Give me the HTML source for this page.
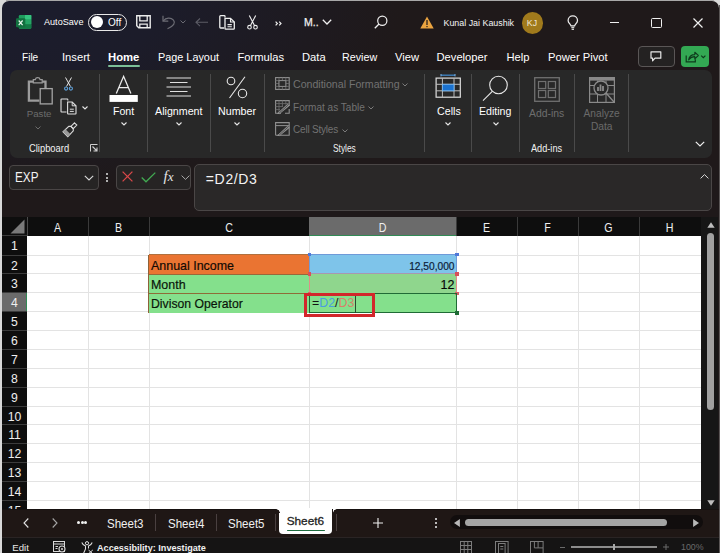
<!DOCTYPE html>
<html><head><meta charset="utf-8">
<style>
*{margin:0;padding:0;box-sizing:border-box}
html,body{width:720px;height:553px;overflow:hidden;background:#d9d9d9}
body{position:relative;font-family:"Liberation Sans",sans-serif;color:#fff}
.a{position:absolute}
.t{position:absolute;white-space:nowrap;line-height:1}
#win{position:absolute;left:2px;top:1px;width:716.5px;height:560px;border-radius:7px 7px 0 0;overflow:hidden;
 background:radial-gradient(ellipse 400px 190px at 0 0,#1b1c2d 0%,#1c1c2a 40%,rgba(31,25,26,0) 100%),#1f191a}
.sep{position:absolute;width:1px;background:#4a4a4a}
svg{position:absolute;overflow:visible}
</style></head><body>
<div id="win"></div>

<!-- TITLE BAR -->
<svg style="left:16px;top:14.7px" width="16" height="14" viewBox="0 0 16 14">
  <rect x="2.8" y="0" width="12.5" height="13.8" rx="1.2" fill="#1f9d5e"/>
  <rect x="9" y="0" width="6.3" height="4.6" fill="#35c47f"/>
  <rect x="9" y="4.6" width="6.3" height="4.6" fill="#25a565"/>
  <rect x="2.8" y="9.2" width="12.5" height="4.6" rx="1" fill="#137a45"/>
  <rect x="0" y="3.2" width="9.3" height="9.1" rx="1" fill="#12703f"/>
  <path d="M2.7 5.5 L6.6 10.2 M6.6 5.5 L2.7 10.2" stroke="#e8f5ec" stroke-width="1.2"/>
</svg>
<div class="t" style="left:44px;top:18px;font-size:9.1px;color:#fff">AutoSave</div>
<div class="a" style="left:87.5px;top:13.5px;width:39px;height:17.5px;border:1.3px solid #e8e8e8;border-radius:9px"></div>
<div class="a" style="left:90.5px;top:15.7px;width:12.6px;height:12.6px;border-radius:50%;background:#fff"></div>
<div class="t" style="left:108px;top:18px;font-size:10px;color:#fff">Off</div>


<!-- save -->
<svg style="left:136px;top:15px" width="15" height="14" viewBox="0 0 15 14">
 <path d="M0.75 0.75 H14.2 V12.8 H2.8 L0.75 10.8 Z" fill="none" stroke="#ececec" stroke-width="1.4"/>
 <path d="M3.8 0.75 V5.9 H11.2 V0.75" fill="none" stroke="#ececec" stroke-width="1.3"/>
 <path d="M3.8 12.8 V9.1 H11.2 V12.8" fill="none" stroke="#ececec" stroke-width="1.3"/>
</svg>
<!-- undo gray -->
<svg style="left:161px;top:15px" width="15" height="15" viewBox="0 0 15 15">
 <path d="M2 0.8 V6.1 H7.3" fill="none" stroke="#6c6c74" stroke-width="1.2"/>
 <path d="M2.3 5.9 C5 2.6 9.8 2.2 12.5 5.2 C14.6 7.8 13 11 6.5 13.8" fill="none" stroke="#6c6c74" stroke-width="1.2"/>
</svg>
<svg style="left:180px;top:20.3px" width="6" height="4" viewBox="0 0 6 4"><path d="M0.5 0.5 L3 3 L5.5 0.5" fill="none" stroke="#6c6c74" stroke-width="1"/></svg>
<!-- back arrow gray -->
<svg style="left:195px;top:18px" width="14" height="9" viewBox="0 0 14 9">
 <path d="M13 4.3 H1 M5 0.5 L1 4.3 L5 8.1" fill="none" stroke="#5c5c66" stroke-width="1.1"/>
</svg>
<!-- copy -->
<svg style="left:219px;top:15px" width="17" height="15" viewBox="0 0 17 15">
 <path d="M6 2.6 V1.4 Q6 0.7 5.3 0.7 H1.6 Q0.8 0.7 0.8 1.4 V12.3 Q0.8 13 1.6 13 H5" fill="none" stroke="#efefef" stroke-width="1.3"/>
 <path d="M6 3.3 H11.5 L15.3 7 V13.4 Q15.3 14.2 14.5 14.2 H6.8 Q6 14.2 6 13.4 Z" fill="none" stroke="#efefef" stroke-width="1.3"/>
 <path d="M11.5 3.3 V7 H15.3" fill="none" stroke="#efefef" stroke-width="1.1"/>
 <path d="M8.5 9.6 H12.8 M8.5 11.7 H12.8" stroke="#efefef" stroke-width="1.1"/>
</svg>
<!-- scissors -->
<svg style="left:247px;top:15px" width="11" height="15" viewBox="0 0 11 15">
 <path d="M2.3 0.5 L7.6 10.8 M8.7 0.5 L3.4 10.8" fill="none" stroke="#efefef" stroke-width="1.1"/>
 <circle cx="2.5" cy="12.2" r="1.8" fill="none" stroke="#efefef" stroke-width="1.1"/>
 <circle cx="8.5" cy="12.2" r="1.8" fill="none" stroke="#efefef" stroke-width="1.1"/>
</svg>
<svg style="left:274.5px;top:21px" width="7" height="5" viewBox="0 0 7 5"><path d="M0.6 0.6 L2.4 2.5 L0.6 4.4 M4.2 0.6 L6 2.5 L4.2 4.4" fill="none" stroke="#efefef" stroke-width="1.2"/></svg>
<div class="t" style="left:304px;top:17.3px;font-size:10.5px;color:#f0f0f0;-webkit-text-stroke:0.25px #f0f0f0">M..</div>
<svg style="left:322px;top:19px" width="10" height="6" viewBox="0 0 10 6"><path d="M0.8 0.8 L5 5 L9.2 0.8" fill="none" stroke="#f0f0f0" stroke-width="1.3"/></svg>
<!-- search -->
<svg style="left:374px;top:15px" width="14" height="14" viewBox="0 0 14 14">
 <circle cx="8.3" cy="5.7" r="4.6" fill="none" stroke="#f0f0f0" stroke-width="1.2"/>
 <path d="M5 9 L0.8 13.2" stroke="#f0f0f0" stroke-width="1.3"/>
</svg>
<!-- warning -->
<svg style="left:420px;top:16px" width="14" height="13" viewBox="0 0 14 13">
 <path d="M7 0.5 L13.7 12.5 H0.3 Z" fill="#eba440"/>
 <rect x="6.4" y="4" width="1.2" height="5" fill="#1e1a1c"/>
 <rect x="6.4" y="10" width="1.2" height="1.2" fill="#1e1a1c"/>
</svg>
<div class="t" style="left:443.5px;top:18.6px;font-size:8.9px;color:#f4f4f4">Kunal Jai Kaushik</div>
<div class="a" style="left:521.5px;top:12.3px;width:21.3px;height:21.3px;border-radius:50%;background:#a07a1c"></div>
<div class="t" style="left:525.5px;top:19px;font-size:8.8px;color:#efe6d2;width:13px;text-align:center">KJ</div>
<!-- bulb -->
<svg style="left:567px;top:14.5px" width="12" height="16" viewBox="0 0 12 16">
 <path d="M4 10.8 C3.6 9.2 1.1 8 1.1 5.4 C1.1 2.7 3.2 0.9 5.8 0.9 C8.4 0.9 10.5 2.7 10.5 5.4 C10.5 8 8 9.2 7.6 10.8 Z" fill="none" stroke="#ececec" stroke-width="1.25"/>
 <path d="M4.3 12.5 H7.3" stroke="#cfcfcf" stroke-width="1.4"/>
 <path d="M4.6 14.3 H7" stroke="#e4e4e4" stroke-width="1.2"/>
</svg>
<!-- window controls -->
<div class="a" style="left:609.5px;top:21.5px;width:9.5px;height:1.2px;background:#f0f0f0"></div>
<div class="a" style="left:651px;top:18px;width:10.5px;height:10px;border:1.2px solid #f0f0f0;border-radius:1.5px"></div>
<svg style="left:693px;top:17.5px" width="10" height="10" viewBox="0 0 10 10"><path d="M0.5 0.5 L9.5 9.5 M9.5 0.5 L0.5 9.5" stroke="#f0f0f0" stroke-width="1.2"/></svg>

<!-- MENU -->
<div class="t" style="left:21.5px;top:51.5px;font-size:11.2px;transform:scaleX(0.9);transform-origin:0 0">File</div>
<div class="t" style="left:62px;top:51.5px;font-size:11.2px">Insert</div>
<div class="t" style="left:108px;top:51.5px;font-size:11.3px;font-weight:bold">Home</div>
<div class="a" style="left:108.3px;top:65px;width:32px;height:1.9px;background:#7cbf98;border-radius:1px"></div>
<div class="t" style="left:157.5px;top:51.5px;font-size:11.2px;transform:scaleX(0.97);transform-origin:0 0">Page Layout</div>
<div class="t" style="left:237.5px;top:51.5px;font-size:11.2px">Formulas</div>
<div class="t" style="left:302px;top:51.5px;font-size:11.2px">Data</div>
<div class="t" style="left:342px;top:51.5px;font-size:11.2px;transform:scaleX(0.96);transform-origin:0 0">Review</div>
<div class="t" style="left:395px;top:51.5px;font-size:11.2px">View</div>
<div class="t" style="left:436.5px;top:51.5px;font-size:11.2px">Developer</div>
<div class="t" style="left:506.5px;top:51.5px;font-size:11.2px">Help</div>
<div class="t" style="left:548px;top:51.5px;font-size:11.2px">Power Pivot</div>
<div class="a" style="left:638px;top:45.5px;width:37px;height:21.5px;border:1px solid #5a5656;border-radius:4px;background:#242222"></div>
<svg style="left:650px;top:51px" width="12" height="11" viewBox="0 0 12 11">
 <path d="M1 0.8 H10.8 V7.2 H5 L2.6 9.8 V7.2 H1 Z" fill="none" stroke="#e8e8e8" stroke-width="1.2" stroke-linejoin="round"/>
</svg>
<div class="a" style="left:681.3px;top:45.5px;width:27.8px;height:21.5px;border-radius:4px;background:#33a853"></div>
<svg style="left:684.5px;top:50.5px" width="22" height="12" viewBox="0 0 22 12">
 <path d="M1.2 4.5 V10.8 H10.3 V8.3" fill="none" stroke="#0e3a1c" stroke-width="1.2"/>
 <path d="M3.6 8.8 C4.2 5.3 6.6 3.6 9.8 3.6 V1.2 L13.3 4.5 L9.8 7.8 V5.6 C7.4 5.6 5.3 6.6 3.6 8.8 Z" fill="none" stroke="#0e3a1c" stroke-width="1.1" stroke-linejoin="round"/>
 <path d="M16.2 4.6 L18.3 6.7 L20.4 4.6" fill="none" stroke="#0e3a1c" stroke-width="1.2"/>
</svg>

<!-- RIBBON -->
<div class="a" style="left:10px;top:70px;width:702px;height:88px;border-radius:7px;background:#282828"></div>
<div class="sep" style="left:99px;top:74px;height:78px"></div>
<div class="sep" style="left:147px;top:74px;height:78px"></div>
<div class="sep" style="left:210px;top:74px;height:78px"></div>
<div class="sep" style="left:264px;top:74px;height:78px"></div>
<div class="sep" style="left:424px;top:74px;height:78px"></div>
<div class="sep" style="left:471px;top:74px;height:78px"></div>
<div class="sep" style="left:519px;top:74px;height:78px"></div>
<div class="sep" style="left:574px;top:74px;height:78px"></div>
<div class="sep" style="left:628px;top:74px;height:78px"></div>

<!-- paste -->
<svg style="left:27px;top:76px" width="27" height="29" viewBox="0 0 27 29">
 <path d="M6 5.7 H1.9 V24.7 H12.4" fill="none" stroke="#9c9c9c" stroke-width="2.3"/>
 <path d="M15.2 5.7 H18.5 V12" fill="none" stroke="#9c9c9c" stroke-width="2.3"/>
 <path d="M6.3 3.6 H8.3 C8.8 1 12.6 1 13.1 3.6 H15.2 V6.8 H6.3 Z" fill="none" stroke="#9c9c9c" stroke-width="1.2"/>
 <rect x="13.2" y="12.6" width="12" height="15.3" fill="none" stroke="#a4a4a4" stroke-width="1.3"/>
</svg>
<div class="t" style="left:26.7px;top:109.4px;font-size:9.7px;color:#6c6c6c">Paste</div>
<svg style="left:35px;top:125.5px" width="6" height="4" viewBox="0 0 6 4"><path d="M0.5 0.5 L3 3 L5.5 0.5" fill="none" stroke="#6c6c6c" stroke-width="1"/></svg>
<!-- cut blue -->
<svg style="left:64px;top:77px" width="9" height="14" viewBox="0 0 9 14">
 <path d="M1.5 0.5 L6.5 9.5 M7.5 0.5 L2.5 9.5" fill="none" stroke="#e6e6e6" stroke-width="1"/>
 <circle cx="2.1" cy="11.6" r="1.55" fill="none" stroke="#5d9fd8" stroke-width="1.1"/>
 <circle cx="6.9" cy="11.6" r="1.55" fill="none" stroke="#5d9fd8" stroke-width="1.1"/>
</svg>
<!-- copy -->
<svg style="left:60px;top:98px" width="18" height="17" viewBox="0 0 18 17">
 <path d="M7.8 2.6 V1.5 Q7.8 1 7.3 1 H1.5 Q1 1 1 1.5 V13.5 Q1 14 1.5 14 H6.5" fill="none" stroke="#e0e0e0" stroke-width="1.1"/>
 <path d="M7.6 4 H12.2 L16 7.8 V15.5 Q16 16 15.5 16 H8.1 Q7.6 16 7.6 15.5 Z" fill="none" stroke="#e0e0e0" stroke-width="1.1"/>
 <path d="M12.2 4 V7.8 H16" fill="none" stroke="#e0e0e0" stroke-width="1"/>
 <path d="M9.8 11.2 H13.8 M9.8 13.4 H13.8" stroke="#e0e0e0" stroke-width="1"/>
</svg>
<svg style="left:82px;top:105.5px" width="6" height="4" viewBox="0 0 6 4"><path d="M0.5 0.5 L3 3 L5.5 0.5" fill="none" stroke="#e6e6e6" stroke-width="1.1"/></svg>
<!-- format painter -->
<svg style="left:61.5px;top:121.5px" width="16" height="16" viewBox="0 0 16 16">
 <path d="M12.5 0.8 L14.8 3.1 L11.2 6.7 L8.9 4.4 Z" fill="none" stroke="#dcdcdc" stroke-width="1.1"/>
 <path d="M8.9 4.4 L11.2 6.7 L11.3 8.8 L5.8 14.6 L1 9.8 L6.8 4.3 Z" fill="none" stroke="#dcdcdc" stroke-width="1.1"/>
 <path d="M1 9.8 L5.8 14.6 L8.3 12 L3.6 7.3 Z" fill="#9a9a9a"/>
</svg>
<div class="t" style="left:29.3px;top:143.9px;font-size:10.2px;color:#f0f0f0;transform:scaleX(0.92);transform-origin:0 0">Clipboard</div>
<svg style="left:90px;top:144px" width="8" height="8" viewBox="0 0 8 8">
 <path d="M0.5 7.5 V0.5 H7.5" fill="none" stroke="#d0d0d0" stroke-width="1"/>
 <path d="M2.5 2.5 L7 7 M7 3.5 V7 H3.5" fill="none" stroke="#d0d0d0" stroke-width="1.1"/>
</svg>

<!-- font -->
<svg style="left:109px;top:76px" width="30" height="27" viewBox="0 0 30 27">
 <path d="M7.3 17.5 L14.6 0.3 L21.9 17.5 M9.7 11.6 H19.5" fill="none" stroke="#ececec" stroke-width="1.3"/>
 <rect x="0.5" y="19" width="28.3" height="6.9" fill="#ffffff"/>
</svg>
<div class="t" style="left:113px;top:106px;font-size:10.6px">Font</div>
<svg style="left:120.5px;top:122px" width="6" height="4" viewBox="0 0 6 4"><path d="M0.5 0.5 L3 3 L5.5 0.5" fill="none" stroke="#e6e6e6" stroke-width="1.1"/></svg>

<!-- alignment -->
<svg style="left:166px;top:77px" width="26" height="21" viewBox="0 0 26 21">
 <path d="M0.5 1 H25 M4 5.5 H21.5 M0.5 10 H25 M4 14.5 H21.5 M0.5 19 H25" stroke="#e0e0e0" stroke-width="1.1"/>
</svg>
<div class="t" style="left:155px;top:106px;font-size:10.7px">Alignment</div>
<svg style="left:176px;top:122px" width="6" height="4" viewBox="0 0 6 4"><path d="M0.5 0.5 L3 3 L5.5 0.5" fill="none" stroke="#e6e6e6" stroke-width="1.1"/></svg>

<!-- number -->
<svg style="left:226px;top:76px" width="22" height="23" viewBox="0 0 22 23">
 <circle cx="5" cy="5" r="3.8" fill="none" stroke="#e8e8e8" stroke-width="1.1"/>
 <circle cx="16.5" cy="17.5" r="4.2" fill="none" stroke="#e8e8e8" stroke-width="1.1"/>
 <path d="M19 0.8 L3.5 22" stroke="#e8e8e8" stroke-width="1.1"/>
</svg>
<div class="t" style="left:218px;top:106px;font-size:10.7px">Number</div>
<svg style="left:233.5px;top:122px" width="6" height="4" viewBox="0 0 6 4"><path d="M0.5 0.5 L3 3 L5.5 0.5" fill="none" stroke="#e6e6e6" stroke-width="1.1"/></svg>

<!-- styles -->
<svg style="left:274.5px;top:77px" width="15" height="13" viewBox="0 0 15 13">
 <rect x="0.6" y="0.6" width="13.6" height="11.8" fill="none" stroke="#909090" stroke-width="1.1"/>
 <path d="M0.6 3.6 H14.2 M0.6 6.5 H14.2 M0.6 9.4 H14.2 M4 0.6 V12.4 M7.4 0.6 V12.4 M10.8 0.6 V12.4" stroke="#6a6a6a" stroke-width="0.9"/>
 <rect x="4" y="3.6" width="6.8" height="5.8" fill="#2a2a2a" stroke="#8a8a8a" stroke-width="1"/>
</svg>
<div class="t" style="left:293px;top:79.3px;font-size:10.6px;color:#727272">Conditional Formatting</div>
<svg style="left:402px;top:82.5px" width="6" height="4" viewBox="0 0 6 4"><path d="M0.5 0.5 L3 3 L5.5 0.5" fill="none" stroke="#7b7b7b" stroke-width="1"/></svg>
<svg style="left:274.5px;top:99.7px" width="15" height="14" viewBox="0 0 15 14">
 <path d="M6 13.2 H0.6 V0.6 H14.2 V6" fill="none" stroke="#909090" stroke-width="1.1"/>
 <path d="M0.6 3.6 H14.2 M0.6 6.6 H8 M0.6 9.6 H5 M4 0.6 V13 M7.4 0.6 V7 M10.8 0.6 V4.5" stroke="#6a6a6a" stroke-width="0.9"/>
 <path d="M2.5 13.4 L12.6 4.2 L14.2 5.8 L4.6 13.6 Z" fill="#9a9a9a" stroke="#9a9a9a" stroke-width="0.6"/>
 <path d="M4.2 13 L13 5.2" stroke="#3a3a3a" stroke-width="0.8"/>
 <path d="M14.2 9 V13.2 H10" fill="none" stroke="#909090" stroke-width="1.1"/>
</svg>
<div class="t" style="left:293px;top:102.6px;font-size:10.05px;color:#727272">Format as Table</div>
<svg style="left:368px;top:105.5px" width="6" height="4" viewBox="0 0 6 4"><path d="M0.5 0.5 L3 3 L5.5 0.5" fill="none" stroke="#7b7b7b" stroke-width="1"/></svg>
<svg style="left:274.5px;top:122.4px" width="15" height="14" viewBox="0 0 15 14">
 <path d="M0.6 13.2 V0.6 H14.2 V13.2 H0.6" fill="none" stroke="#909090" stroke-width="1.1"/>
 <path d="M0.6 3.6 H14.2" stroke="#909090" stroke-width="1"/>
 <path d="M2.5 13.4 L12.6 4.2 L14.2 5.8 L4.6 13.6 Z" fill="#9a9a9a" stroke="#9a9a9a" stroke-width="0.6"/>
 <path d="M4.2 13 L13 5.2" stroke="#3a3a3a" stroke-width="0.8"/>
</svg>
<div class="t" style="left:293px;top:125.2px;font-size:10px;letter-spacing:-0.2px;color:#727272">Cell Styles</div>
<svg style="left:342px;top:128.5px" width="6" height="4" viewBox="0 0 6 4"><path d="M0.5 0.5 L3 3 L5.5 0.5" fill="none" stroke="#7b7b7b" stroke-width="1"/></svg>
<div class="t" style="left:332.8px;top:143.9px;font-size:10.2px;color:#f0f0f0;transform:scaleX(0.82);transform-origin:0 0">Styles</div>

<!-- cells -->
<svg style="left:435px;top:74px" width="27" height="25" viewBox="0 0 27 25">
 <path d="M6 1.2 H20" stroke="#3f86c8" stroke-width="1.3"/>
 <path d="M6 0 V2.4 M20 0 V2.4" stroke="#7ab4e8" stroke-width="1"/>
 <rect x="1.1" y="4.1" width="24.2" height="19.1" fill="none" stroke="#dedede" stroke-width="1.2"/>
 <path d="M1.1 10.3 H25.3 M1.1 16.8 H25.3 M7.4 4.1 V23.2 M19 4.1 V23.2" stroke="#bdbdbd" stroke-width="1"/>
 <rect x="7.4" y="10.3" width="11.6" height="6.5" fill="#1a72d0" stroke="#78b8f0" stroke-width="0.9"/>
</svg>
<div class="t" style="left:437px;top:106px;font-size:10.7px">Cells</div>
<svg style="left:444.5px;top:122px" width="6" height="4" viewBox="0 0 6 4"><path d="M0.5 0.5 L3 3 L5.5 0.5" fill="none" stroke="#e6e6e6" stroke-width="1.1"/></svg>

<!-- editing -->
<svg style="left:482px;top:75px" width="27" height="27" viewBox="0 0 27 27">
 <circle cx="16.5" cy="10" r="8.8" fill="none" stroke="#e8e8e8" stroke-width="1.1"/>
 <path d="M10.3 16.3 L1 25.6" stroke="#e8e8e8" stroke-width="1.1"/>
</svg>
<div class="t" style="left:479px;top:106px;font-size:10.6px">Editing</div>
<svg style="left:492.5px;top:122px" width="6" height="4" viewBox="0 0 6 4"><path d="M0.5 0.5 L3 3 L5.5 0.5" fill="none" stroke="#e6e6e6" stroke-width="1.1"/></svg>

<!-- add-ins -->
<svg style="left:534px;top:77px" width="26" height="25" viewBox="0 0 26 25">
 <rect x="0.7" y="0.7" width="24.6" height="23.6" fill="none" stroke="#707070" stroke-width="1.3"/>
 <rect x="4.5" y="4.5" width="7.2" height="7" fill="none" stroke="#707070" stroke-width="1.2"/>
 <rect x="14.3" y="4.5" width="7.2" height="7" fill="none" stroke="#707070" stroke-width="1.2"/>
 <rect x="4.5" y="13.5" width="7.2" height="7" fill="none" stroke="#707070" stroke-width="1.2"/>
 <rect x="14.3" y="13.5" width="7.2" height="7" fill="none" stroke="#707070" stroke-width="1.2"/>
</svg>
<div class="t" style="left:529px;top:108.5px;font-size:10.4px;color:#6e6e6e">Add-ins</div>
<div class="t" style="left:531px;top:143.9px;font-size:10.2px;color:#f0f0f0;transform:scaleX(0.9);transform-origin:0 0">Add-ins</div>

<!-- analyze -->
<svg style="left:588.5px;top:76.5px" width="26" height="26" viewBox="0 0 26 26">
 <rect x="0.6" y="0.6" width="24.8" height="24.8" fill="none" stroke="#8a8a8a" stroke-width="1.2"/>
 <rect x="0.6" y="0.6" width="24.8" height="3" fill="#8a8a8a"/>
 <path d="M0.6 8.5 H25.4 M0.6 17 H25.4 M8.5 3.6 V25.4 M17 3.6 V25.4" stroke="#8a8a8a" stroke-width="1"/>
 <circle cx="12" cy="11" r="7" fill="#282828" stroke="#8a8a8a" stroke-width="1.3"/>
 <path d="M17 16 L25 25" stroke="#8a8a8a" stroke-width="1.3"/>
 <path d="M9 14 V10 M11.5 14 V7.5 M14 14 V9" stroke="#8a8a8a" stroke-width="1.8"/>
</svg>
<div class="t" style="left:583.5px;top:108.5px;font-size:10.2px;color:#6a6a6a">Analyze</div>
<div class="t" style="left:591px;top:122px;font-size:10.2px;color:#6a6a6a">Data</div>
<svg style="left:694.5px;top:140.5px" width="10" height="6" viewBox="0 0 10 6"><path d="M0.8 0.8 L5 5 L9.2 0.8" fill="none" stroke="#f0f0f0" stroke-width="1.2"/></svg>


<!-- FORMULA BAR -->
<div class="a" style="left:9px;top:164.5px;width:90px;height:25px;border:1px solid #4a4646;border-radius:4px;background:#262424"></div>
<div class="t" style="left:14.8px;top:171px;font-size:13.8px;color:#f2f2f2;transform:scaleX(0.85);transform-origin:0 0">EXP</div>
<svg style="left:83.7px;top:175.3px" width="10" height="6" viewBox="0 0 10 6"><path d="M0.8 0.8 L5 5 L9.2 0.8" fill="none" stroke="#d8d8d8" stroke-width="1.1"/></svg>
<div class="a" style="left:106px;top:173px;width:2px;height:2px;border-radius:1px;background:#e0e0e0"></div>
<div class="a" style="left:106px;top:176.5px;width:2px;height:2px;border-radius:1px;background:#e0e0e0"></div>
<div class="a" style="left:106px;top:180px;width:2px;height:2px;border-radius:1px;background:#e0e0e0"></div>
<div class="a" style="left:116px;top:164.5px;width:74.5px;height:25px;border:1px solid #4a4646;border-radius:4px;background:#262424"></div>
<svg style="left:122px;top:171px" width="11" height="11" viewBox="0 0 11 11"><path d="M0.6 0.6 L10.4 10.4 M10.4 0.6 L0.6 10.4" stroke="#d9484a" stroke-width="1.3"/></svg>
<svg style="left:141px;top:171.5px" width="15" height="11" viewBox="0 0 15 11"><path d="M0.7 5.5 L5 9.8 L14.3 0.6" fill="none" stroke="#42aa52" stroke-width="1.3"/></svg>
<div class="t" style="left:163.5px;top:169.3px;font-size:15px;color:#e4e4e4;font-family:'Liberation Serif',serif;font-style:italic">f<span style="font-size:13px">x</span></div>
<svg style="left:180.5px;top:175px" width="9" height="5" viewBox="0 0 9 5"><path d="M0.6 0.6 L4.5 4.4 L8.4 0.6" fill="none" stroke="#a8a8a8" stroke-width="1"/></svg>
<div class="a" style="left:194px;top:164px;width:518px;height:47.2px;border:1px solid #4a4646;border-radius:5px;background:#2a2828"></div>
<div class="t" style="left:205.8px;top:171.8px;font-size:14px;color:#f4f4f4;letter-spacing:0.65px">=D2/D3</div>
<svg style="left:700px;top:173.5px" width="9" height="5" viewBox="0 0 9 5"><path d="M0.6 4.4 L4.5 0.6 L8.4 4.4" fill="none" stroke="#d8d8d8" stroke-width="1"/></svg>

<!-- GRID -->
<div class="a" style="left:2px;top:217px;width:699px;height:292px;background:#0e0e0e"></div>
<div class="a" style="left:27px;top:236px;width:674px;height:273px;background:#ffffff"></div>
<svg style="left:9.3px;top:219.4px" width="16" height="15" viewBox="0 0 16 15"><path d="M15.5 0.5 V14.5 H1.5 Z" fill="#7a7a7a"/></svg>
<div class="t" style="left:27px;top:220.7px;width:61px;text-align:center;font-size:13px;color:#efefef;transform:scaleX(0.82)">A</div>
<div class="a" style="left:88px;top:217px;width:1px;height:19px;background:#3a3a3a"></div>
<div class="t" style="left:88px;top:220.7px;width:61px;text-align:center;font-size:13px;color:#efefef;transform:scaleX(0.82)">B</div>
<div class="a" style="left:149px;top:217px;width:1px;height:19px;background:#3a3a3a"></div>
<div class="t" style="left:149px;top:220.7px;width:160px;text-align:center;font-size:13px;color:#efefef;transform:scaleX(0.82)">C</div>
<div class="a" style="left:309px;top:217px;width:1px;height:19px;background:#3a3a3a"></div>
<div class="a" style="left:309px;top:217px;width:147.75px;height:19px;background:#6b6b6b;border-bottom:1.2px solid #318a55"></div>
<div class="t" style="left:309px;top:220.7px;width:147px;text-align:center;font-size:13px;color:#efefef;transform:scaleX(0.82)">D</div>
<div class="a" style="left:456px;top:217px;width:1px;height:19px;background:#3a3a3a"></div>
<div class="t" style="left:456px;top:220.7px;width:61px;text-align:center;font-size:13px;color:#efefef;transform:scaleX(0.82)">E</div>
<div class="a" style="left:517px;top:217px;width:1px;height:19px;background:#3a3a3a"></div>
<div class="t" style="left:517px;top:220.7px;width:61px;text-align:center;font-size:13px;color:#efefef;transform:scaleX(0.82)">F</div>
<div class="a" style="left:578px;top:217px;width:1px;height:19px;background:#3a3a3a"></div>
<div class="t" style="left:578px;top:220.7px;width:61px;text-align:center;font-size:13px;color:#efefef;transform:scaleX(0.82)">G</div>
<div class="a" style="left:639px;top:217px;width:1px;height:19px;background:#3a3a3a"></div>
<div class="t" style="left:639px;top:220.7px;width:61px;text-align:center;font-size:13px;color:#efefef;transform:scaleX(0.82)">H</div>
<div class="a" style="left:27px;top:217px;width:1px;height:19px;background:#4a4a4a"></div>
<div class="a" style="left:2px;top:235px;width:25px;height:1px;background:#3c3c3c"></div>
<div class="a" style="left:88px;top:236px;width:1px;height:273px;background:#e3e3e3"></div>
<div class="a" style="left:149px;top:236px;width:1px;height:273px;background:#e3e3e3"></div>
<div class="a" style="left:309px;top:236px;width:1px;height:273px;background:#e3e3e3"></div>
<div class="a" style="left:456px;top:236px;width:1px;height:273px;background:#e3e3e3"></div>
<div class="a" style="left:517px;top:236px;width:1px;height:273px;background:#e3e3e3"></div>
<div class="a" style="left:578px;top:236px;width:1px;height:273px;background:#e3e3e3"></div>
<div class="a" style="left:639px;top:236px;width:1px;height:273px;background:#e3e3e3"></div>
<div class="t" style="left:2px;top:239.30px;width:25px;text-align:center;font-size:13px;color:#efefef;transform:scaleX(0.94)">1</div>
<div class="a" style="left:2px;top:254.60px;width:25px;height:1px;background:#3c3c3c"></div>
<div class="a" style="left:27px;top:254.60px;width:674px;height:1px;background:#e3e3e3"></div>
<div class="t" style="left:2px;top:258.53px;width:25px;text-align:center;font-size:13px;color:#efefef;transform:scaleX(0.94)">2</div>
<div class="a" style="left:2px;top:273.47px;width:25px;height:1px;background:#3c3c3c"></div>
<div class="a" style="left:27px;top:273.47px;width:674px;height:1px;background:#e3e3e3"></div>
<div class="t" style="left:2px;top:277.40px;width:25px;text-align:center;font-size:13px;color:#efefef;transform:scaleX(0.94)">3</div>
<div class="a" style="left:2px;top:292.34px;width:25px;height:1px;background:#3c3c3c"></div>
<div class="a" style="left:27px;top:292.34px;width:674px;height:1px;background:#e3e3e3"></div>
<div class="a" style="left:2px;top:293.34px;width:25px;height:18.87px;background:#6b6b6b;border-right:1.2px solid #318a55"></div>
<div class="t" style="left:2px;top:296.27px;width:25px;text-align:center;font-size:13px;color:#efefef;transform:scaleX(0.94)">4</div>
<div class="a" style="left:2px;top:311.21px;width:25px;height:1px;background:#3c3c3c"></div>
<div class="a" style="left:27px;top:311.21px;width:674px;height:1px;background:#e3e3e3"></div>
<div class="t" style="left:2px;top:315.14px;width:25px;text-align:center;font-size:13px;color:#efefef;transform:scaleX(0.94)">5</div>
<div class="a" style="left:2px;top:330.08px;width:25px;height:1px;background:#3c3c3c"></div>
<div class="a" style="left:27px;top:330.08px;width:674px;height:1px;background:#e3e3e3"></div>
<div class="t" style="left:2px;top:334.01px;width:25px;text-align:center;font-size:13px;color:#efefef;transform:scaleX(0.94)">6</div>
<div class="a" style="left:2px;top:348.95px;width:25px;height:1px;background:#3c3c3c"></div>
<div class="a" style="left:27px;top:348.95px;width:674px;height:1px;background:#e3e3e3"></div>
<div class="t" style="left:2px;top:352.88px;width:25px;text-align:center;font-size:13px;color:#efefef;transform:scaleX(0.94)">7</div>
<div class="a" style="left:2px;top:367.82px;width:25px;height:1px;background:#3c3c3c"></div>
<div class="a" style="left:27px;top:367.82px;width:674px;height:1px;background:#e3e3e3"></div>
<div class="t" style="left:2px;top:371.75px;width:25px;text-align:center;font-size:13px;color:#efefef;transform:scaleX(0.94)">8</div>
<div class="a" style="left:2px;top:386.69px;width:25px;height:1px;background:#3c3c3c"></div>
<div class="a" style="left:27px;top:386.69px;width:674px;height:1px;background:#e3e3e3"></div>
<div class="t" style="left:2px;top:390.62px;width:25px;text-align:center;font-size:13px;color:#efefef;transform:scaleX(0.94)">9</div>
<div class="a" style="left:2px;top:405.56px;width:25px;height:1px;background:#3c3c3c"></div>
<div class="a" style="left:27px;top:405.56px;width:674px;height:1px;background:#e3e3e3"></div>
<div class="t" style="left:2px;top:409.50px;width:25px;text-align:center;font-size:13px;color:#efefef;transform:scaleX(0.94)">10</div>
<div class="a" style="left:2px;top:424.43px;width:25px;height:1px;background:#3c3c3c"></div>
<div class="a" style="left:27px;top:424.43px;width:674px;height:1px;background:#e3e3e3"></div>
<div class="t" style="left:2px;top:428.37px;width:25px;text-align:center;font-size:13px;color:#efefef;transform:scaleX(0.94)">11</div>
<div class="a" style="left:2px;top:443.30px;width:25px;height:1px;background:#3c3c3c"></div>
<div class="a" style="left:27px;top:443.30px;width:674px;height:1px;background:#e3e3e3"></div>
<div class="t" style="left:2px;top:447.24px;width:25px;text-align:center;font-size:13px;color:#efefef;transform:scaleX(0.94)">12</div>
<div class="a" style="left:2px;top:462.17px;width:25px;height:1px;background:#3c3c3c"></div>
<div class="a" style="left:27px;top:462.17px;width:674px;height:1px;background:#e3e3e3"></div>
<div class="t" style="left:2px;top:466.11px;width:25px;text-align:center;font-size:13px;color:#efefef;transform:scaleX(0.94)">13</div>
<div class="a" style="left:2px;top:481.04px;width:25px;height:1px;background:#3c3c3c"></div>
<div class="a" style="left:27px;top:481.04px;width:674px;height:1px;background:#e3e3e3"></div>
<div class="t" style="left:2px;top:484.97px;width:25px;text-align:center;font-size:13px;color:#efefef;transform:scaleX(0.94)">14</div>
<div class="a" style="left:2px;top:499.91px;width:25px;height:1px;background:#3c3c3c"></div>
<div class="a" style="left:27px;top:499.91px;width:674px;height:1px;background:#e3e3e3"></div>
<div class="t" style="left:2px;top:503.84px;width:25px;text-align:center;font-size:13px;color:#efefef;transform:scaleX(0.94)">15</div>
<div class="a" style="left:2px;top:518.78px;width:25px;height:1px;background:#3c3c3c"></div>
<div class="a" style="left:27px;top:518.78px;width:674px;height:1px;background:#e3e3e3"></div>
<div class="t" style="left:2px;top:522.71px;width:25px;text-align:center;font-size:13px;color:#efefef;transform:scaleX(0.94)">16</div>
<div class="a" style="left:2px;top:537.65px;width:25px;height:1px;background:#3c3c3c"></div>
<div class="a" style="left:27px;top:537.65px;width:674px;height:1px;background:#e3e3e3"></div>
<!-- vscroll -->
<div class="a" style="left:701px;top:217px;width:17px;height:292px;background:#161616"></div>
<svg style="left:706.5px;top:222px" width="8" height="6" viewBox="0 0 8 6"><path d="M4 0.3 L7.7 5.7 H0.3 Z" fill="#bdbdbd"/></svg>
<div class="a" style="left:706.6px;top:233px;width:7.5px;height:177px;border-radius:3.75px;background:#a0a0a0"></div>
<div class="a" style="left:701px;top:497px;width:17px;height:12px;background:#161616"></div>
<svg style="left:706.5px;top:499.5px" width="8" height="6" viewBox="0 0 8 6"><path d="M0.3 0.3 H7.7 L4 5.7 Z" fill="#bdbdbd"/></svg>
<!-- CELLS -->
<div class="a" style="left:148.5px;top:254.5px;width:160.5px;height:19.5px;background:#ea7432"></div>
<div class="a" style="left:148.5px;top:273.5px;width:160.5px;height:39.2px;background:#84e08c"></div>
<div class="a" style="left:148.5px;top:254px;width:160.5px;height:1px;background:#b0703e"></div>
<div class="a" style="left:148px;top:254.5px;width:1.2px;height:58px;background:#8e6238"></div>
<div class="a" style="left:149px;top:273.5px;width:160px;height:1px;background:#98683a"></div>
<div class="a" style="left:149px;top:292.8px;width:160px;height:1px;background:#8e6c38"></div>

<div class="a" style="left:309px;top:254.5px;width:148px;height:19.5px;background:#7ec4ea"></div>
<div class="a" style="left:309px;top:273.5px;width:148px;height:19.5px;background:#8fd68d"></div>
<div class="a" style="left:309px;top:292.5px;width:148px;height:20px;background:#84e08c"></div>
<!-- D2 blue ref border -->
<div class="a" style="left:309px;top:254px;width:148px;height:20px;border:1px solid #6f9ad8;border-bottom-color:#a898b0"></div>
<div class="a" style="left:307.5px;top:252.5px;width:3.5px;height:3.5px;background:#4f78d8"></div>
<div class="a" style="left:455px;top:252.5px;width:3.5px;height:3.5px;background:#4f78d8"></div>
<!-- D3 salmon ref border -->
<div class="a" style="left:309px;top:273.5px;width:148px;height:20px;border:1px solid #dc9088;border-top-color:transparent"></div>
<div class="a" style="left:307.5px;top:272px;width:3.5px;height:3.5px;background:#d8505a"></div>
<div class="a" style="left:455px;top:272px;width:3.5px;height:3.5px;background:#d8505a"></div>
<div class="a" style="left:307.5px;top:291.5px;width:3.5px;height:3.5px;background:#d8606a"></div>
<div class="a" style="left:455px;top:291.5px;width:3.5px;height:3.5px;background:#d8606a"></div>
<!-- D4 active -->
<div class="a" style="left:309px;top:293px;width:148px;height:20px;border:1.3px solid #1f6b35;border-top-width:1.5px"></div>
<div class="a" style="left:455px;top:311px;width:3.5px;height:3.5px;background:#1f6b35"></div>
<div class="t" style="left:151px;top:258.6px;font-size:13.6px;color:#120a04;transform:scaleX(0.915);transform-origin:0 0;-webkit-text-stroke:0.2px #120a04">Annual Income</div>
<div class="t" style="left:151px;top:277.9px;font-size:13.6px;color:#0a140a;transform:scaleX(0.915);transform-origin:0 0;-webkit-text-stroke:0.2px #0a140a">Month</div>
<div class="t" style="left:151px;top:297px;font-size:13.6px;color:#0a140a;transform:scaleX(0.9);transform-origin:0 0;-webkit-text-stroke:0.2px #0a140a">Divison Operator</div>
<div class="t" style="left:354px;width:100.5px;text-align:right;top:261.6px;font-size:10.2px;color:#0c2038;-webkit-text-stroke:0.2px #0c2038">12,50,000</div>
<div class="t" style="left:354px;width:100.5px;text-align:right;top:277.8px;font-size:13.6px;color:#050505;transform:scaleX(0.92);transform-origin:100% 0;-webkit-text-stroke:0.15px #050505">12</div>
<div class="t" style="left:312px;top:297.2px;font-size:12.4px;color:#141414">=<span style="color:#4a9de0">D2</span>/<span style="color:#d8806a">D3</span></div>
<div class="a" style="left:355px;top:295.5px;width:1px;height:17px;background:#2c4a30"></div>
<div class="a" style="left:303.5px;top:293px;width:71.5px;height:23.5px;border:3px solid #d2272b"></div>
<!-- SHEET TABS BAR -->
<div class="a" style="left:2px;top:508.5px;width:716.5px;height:28.5px;background:#1f1715"></div>
<div class="a" style="left:2px;top:508.5px;width:716.5px;height:1.5px;background:#161110"></div>
<svg style="left:22.5px;top:517.6px" width="6" height="10" viewBox="0 0 6 10"><path d="M5.3 0.5 L1 5 L5.3 9.5" fill="none" stroke="#e2e2e2" stroke-width="1.1"/></svg>
<svg style="left:51.5px;top:517.6px" width="6" height="10" viewBox="0 0 6 10"><path d="M0.7 0.5 L5 5 L0.7 9.5" fill="none" stroke="#a6a6a6" stroke-width="1.1"/></svg>
<div class="a" style="left:77px;top:520.8px;width:3px;height:3px;border-radius:50%;background:#f2f2f2"></div>
<div class="a" style="left:80.6px;top:520.8px;width:3px;height:3px;border-radius:50%;background:#f2f2f2"></div>
<div class="a" style="left:84.2px;top:520.8px;width:3px;height:3px;border-radius:50%;background:#f2f2f2"></div>
<div class="t" style="left:107.3px;top:517.9px;font-size:12.4px;color:#f0f0f0;transform:scaleX(0.93);transform-origin:0 0">Sheet3</div>
<div class="a" style="left:155px;top:514px;width:1px;height:17px;background:#4a4040"></div>
<div class="t" style="left:167.5px;top:517.9px;font-size:12.4px;color:#f0f0f0;transform:scaleX(0.93);transform-origin:0 0">Sheet4</div>
<div class="a" style="left:215.5px;top:514px;width:1px;height:17px;background:#4a4040"></div>
<div class="t" style="left:227.5px;top:517.9px;font-size:12.4px;color:#f0f0f0;transform:scaleX(0.93);transform-origin:0 0">Sheet5</div>
<div class="a" style="left:275px;top:514px;width:1px;height:17px;background:#4a4040"></div>
<!-- active tab -->
<div class="a" style="left:279px;top:508px;width:53.3px;height:26px;background:#fff;border-radius:0 0 4px 4px"></div>
<div class="a" style="left:275.5px;top:508.5px;width:4px;height:4px;background:radial-gradient(circle at 0 100%,#1f1715 3.5px,#fff 4px)"></div>
<div class="a" style="left:332.5px;top:508.5px;width:4px;height:4px;background:radial-gradient(circle at 100% 100%,#1f1715 3.5px,#fff 4px)"></div>
<div class="t" style="left:286.7px;top:515.5px;font-size:11.8px;color:#222;-webkit-text-stroke:0.3px #222">Sheet6</div>
<div class="a" style="left:286.5px;top:529.7px;width:38px;height:1.6px;border-radius:1px;background:#1f6e40"></div>
<div class="a" style="left:335.5px;top:514px;width:1px;height:17px;background:#4a4040"></div>
<svg style="left:372.5px;top:517.6px" width="10" height="10" viewBox="0 0 10 10"><path d="M5 0 V10 M0 5 H10" stroke="#f0f0f0" stroke-width="1.1"/></svg>
<div class="a" style="left:435px;top:517.5px;width:2.2px;height:2.2px;border-radius:1px;background:#f0f0f0"></div>
<div class="a" style="left:435px;top:521.5px;width:2.2px;height:2.2px;border-radius:1px;background:#f0f0f0"></div>
<div class="a" style="left:435px;top:525.5px;width:2.2px;height:2.2px;border-radius:1px;background:#f0f0f0"></div>
<div class="a" style="left:450px;top:515px;width:253px;height:14.2px;border-radius:7px;background:#110d0d"></div>
<svg style="left:454.4px;top:518.6px" width="6" height="8" viewBox="0 0 6 8"><path d="M5.9 0 V8 L0 4 Z" fill="#b8b8b8"/></svg>
<div class="a" style="left:465px;top:518.8px;width:202.2px;height:7.3px;border-radius:3.65px;background:#a4a4a4"></div>
<svg style="left:692.6px;top:518.6px" width="6" height="8" viewBox="0 0 6 8"><path d="M0.1 0 V8 L6 4 Z" fill="#b8b8b8"/></svg>

<!-- STATUS BAR -->
<div class="a" style="left:2px;top:537px;width:716.5px;height:16px;background:#151414"></div>
<div class="a" style="left:2px;top:537px;width:716.5px;height:1px;background:#2a2424"></div>
<div class="t" style="left:12.3px;top:543.2px;font-size:9.6px;color:#e8e8e8">Edit</div>
<svg style="left:53px;top:541px" width="13" height="12" viewBox="0 0 13 12">
 <rect x="0.5" y="0.5" width="11" height="10" fill="none" stroke="#d8d8d8" stroke-width="1"/>
 <path d="M0.5 3 H11.5 M2.5 5.5 H5 M2.5 7.5 H4.5" stroke="#d8d8d8" stroke-width="1"/>
 <circle cx="9" cy="8" r="3" fill="#1a1717" stroke="#d8d8d8" stroke-width="1.1"/>
 <circle cx="9" cy="8" r="1" fill="#d8d8d8"/>
</svg>
<svg style="left:80.5px;top:540.5px" width="13" height="13" viewBox="0 0 13 13">
 <circle cx="6" cy="2.2" r="1.6" fill="none" stroke="#e0e0e0" stroke-width="1"/>
 <path d="M0.8 1.5 Q2 4.5 4.5 5 V8 L2.5 12.5 M11.2 1.5 Q10 4.5 7.5 5 V7.5" fill="none" stroke="#e0e0e0" stroke-width="1.05"/>
 <path d="M7.5 9 L11.8 12.8 M11.8 9 L7.5 12.8" stroke="#e0e0e0" stroke-width="1"/>
</svg>
<div class="t" style="left:97.2px;top:543px;font-size:9.6px;font-weight:bold;color:#f0f0f0;transform:scaleX(0.95);transform-origin:0 0">Accessibility: Investigate</div>
<svg style="left:460px;top:540.7px" width="12" height="13" viewBox="0 0 12 13">
 <rect x="0.5" y="0.5" width="11" height="12" fill="none" stroke="#7c7c7c" stroke-width="1"/>
 <path d="M0.5 4.5 H11.5 M0.5 8.5 H11.5 M4.2 0.5 V12.5 M7.8 0.5 V12.5" stroke="#7c7c7c" stroke-width="1"/>
</svg>
<svg style="left:495px;top:540.7px" width="14" height="13" viewBox="0 0 14 13">
 <rect x="0.5" y="0.5" width="12.6" height="12" fill="none" stroke="#7c7c7c" stroke-width="1"/>
 <rect x="3.5" y="2.5" width="6.6" height="10" fill="none" stroke="#7c7c7c" stroke-width="1"/>
 <path d="M5.3 5.5 H8.3 M5.3 8 H8.3" stroke="#7c7c7c" stroke-width="1"/>
</svg>
<svg style="left:530px;top:540.7px" width="14" height="13" viewBox="0 0 14 13">
 <rect x="0.5" y="0.5" width="12.6" height="12" fill="none" stroke="#7c7c7c" stroke-width="1"/>
 <path d="M4.4 0.5 V6.9 H8.1 V0.5 M8.1 6.9 H13" fill="none" stroke="#7c7c7c" stroke-width="1"/>
</svg>
<div class="a" style="left:559.5px;top:546.5px;width:5.8px;height:1.1px;background:#6a6a6a"></div>
<div class="a" style="left:570.8px;top:546.3px;width:86.6px;height:1.8px;background:#8c8c8c"></div>
<div class="a" style="left:612.8px;top:544px;width:2.2px;height:6.2px;background:#a8a8a8"></div>
<svg style="left:662.9px;top:544.3px" width="6" height="6" viewBox="0 0 6 6"><path d="M3 0 V6 M0 3 H6" stroke="#6a6a6a" stroke-width="1"/></svg>
<div class="t" style="left:680.5px;top:542.2px;font-size:9.6px;color:#6a6a6a;transform:scaleX(0.92);transform-origin:0 0">100%</div>
<!-- window edges -->
<div class="a" style="left:718.5px;top:5px;width:1.5px;height:548px;background:#5a5656"></div>
<div class="a" style="left:6px;top:0;width:708px;height:1px;background:#a8a8a8"></div>

</body></html>
